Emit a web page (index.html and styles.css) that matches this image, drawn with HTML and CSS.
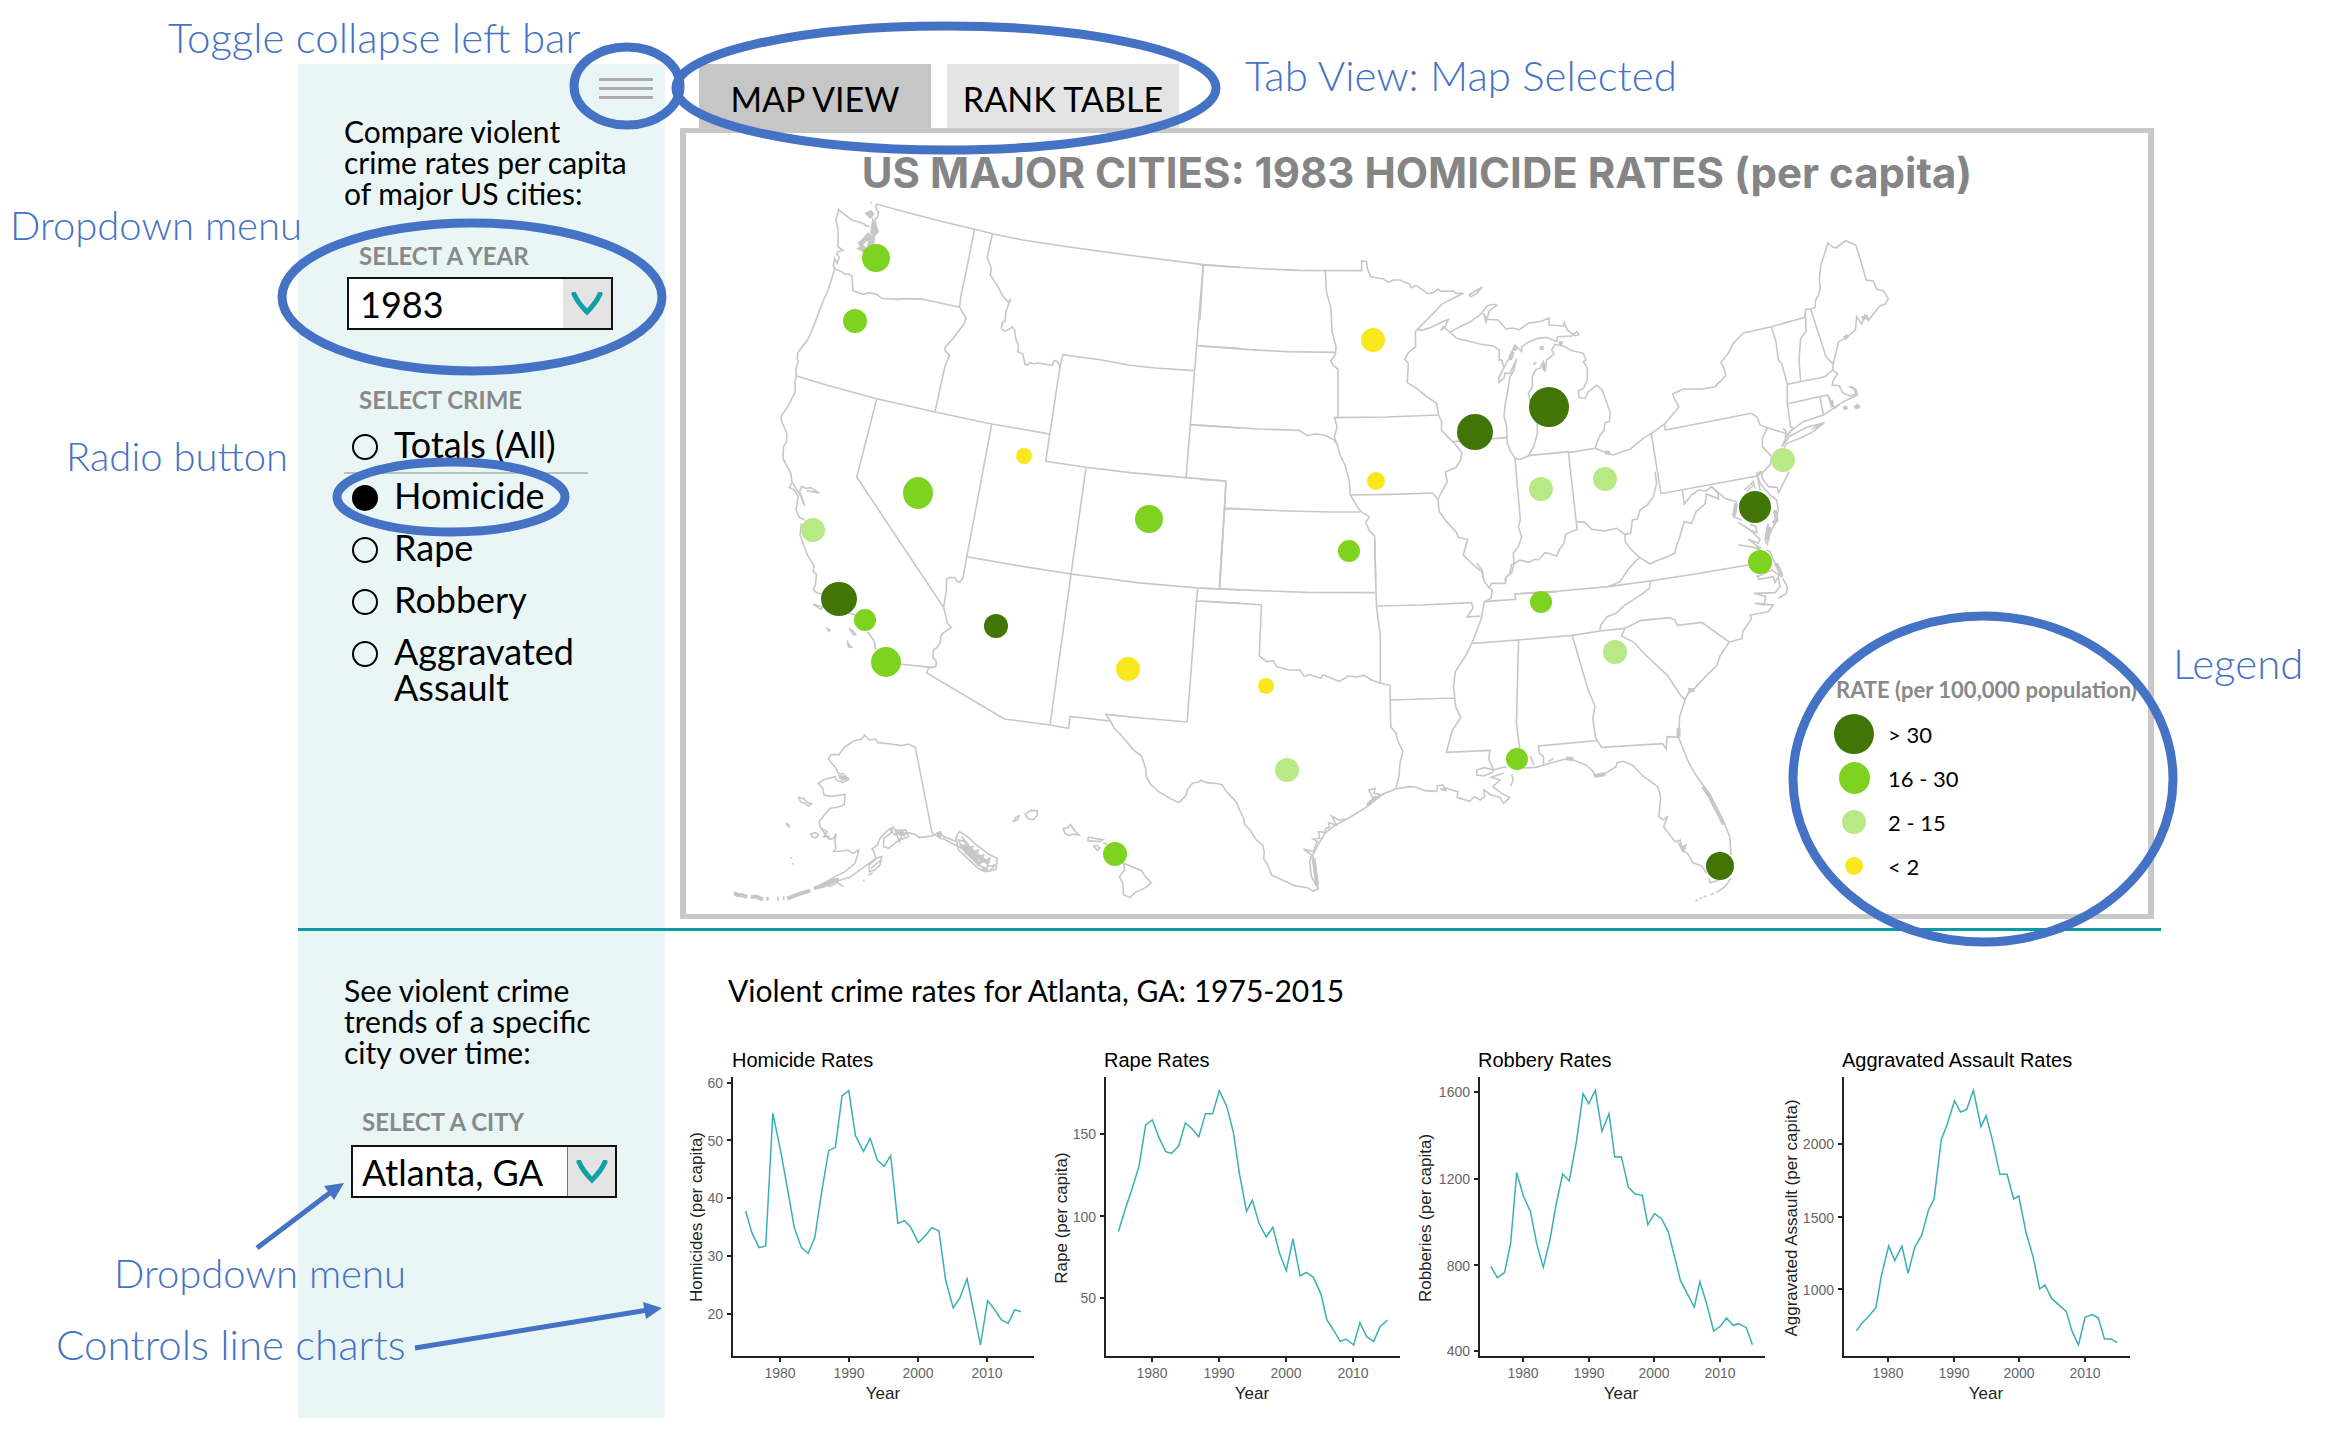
FILE: index.html
```html
<!DOCTYPE html>
<html lang="en">
<head>
<meta charset="utf-8">
<title>US Major Cities: Violent Crime Rates</title>
<link rel="stylesheet" href="styles.css">
</head>
<body>
<div class="app">
  <section class="row row-map">
    <aside class="sidebar">
      <button class="menu-toggle" type="button" aria-label="Toggle sidebar"><span></span><span></span><span></span></button>
      <p class="intro">Compare violent<br>crime rates per capita<br>of major US cities:</p>
      <label class="field-label year-label" for="year">SELECT A YEAR</label>
      <div class="dropdown">
        <select id="year"><option>1983</option></select>
        <span class="arrow"><svg viewBox="0 0 32 24"><path d="M3 2C6 9 11 15 16 20C21 15 26 9 29 2"/></svg></span>
      </div>
      <fieldset class="crimes">
        <legend class="field-label">SELECT CRIME</legend>
        <label class="crime all"><input type="radio" name="crime">Totals (All)</label>
        <label class="crime"><input type="radio" name="crime" checked>Homicide</label>
        <label class="crime"><input type="radio" name="crime">Rape</label>
        <label class="crime"><input type="radio" name="crime">Robbery</label>
        <label class="crime"><input type="radio" name="crime">Aggravated<br>Assault</label>
      </fieldset>
    </aside>
    <main class="main">
      <div class="tabs" role="tablist">
        <button class="tab selected" role="tab" aria-selected="true">MAP VIEW</button>
        <button class="tab" role="tab" aria-selected="false">RANK TABLE</button>
      </div>
      <div class="panel">
        <h1>US MAJOR CITIES: 1983 HOMICIDE RATES (per capita)</h1>
        <svg class="map" viewBox="686 198 1462 716" role="img" aria-label="Map of homicide rates">
          <g class="states">
            <!-- Northwest -->
            <g transform="translate(680 120) scale(.35714 .33333)">
              <path d="M549 252L640 278L725 302L825 328L875 341L960 360L1090 381L1280 409L1465 434L1568 442"/>
              <path d="M549 252L550 268L556 275L553 292L546 298L549 315L554 335L545 345L541 372M531 320L520 317L515 311L480 299L462 285L444 268L441 285L436 300L442 322L443 350L442 380L456 391L441 396L439 403L446 412L440 430L433 415L429 438L433 446L452 455L463 463L472 462L482 468L484 512L512 523L530 518L550 523L565 535L607 538L640 536L681 538L783 562"/>
              <path class="fill" d="M540 300l8 20 6 15-9 12-10-8 2-20zM500 370L527 340 538 350 505 376zM498 385l14-8 10 8-8 10zM520 280l14-8 8 10-8 12zM532 350l12-4-2 26-16 4zM533 246l4 2"/>
              <path d="M825 328L800 460L786 530L783 562L801 596L795 612L765 655L742 683L742 692L755 706L742 738L714 876"/>
              <path d="M875 341L860 412L872 445L869 465L885 490L905 530L918 545L925 540L912 575L911 602L903 607L900 625L908 633L918 630L930 621L937 630L940 655L948 678L946 695L960 702L966 733L972 735L981 728L990 732L1003 729L1042 736L1047 722L1056 724L1064 740L1072 704L1180 720L1260 736L1330 744L1441 752"/>
              <path d="M1064 740L1024 1024L1137 1042L1260 1058L1417 1073L1529 1083M1465 434L1441 752L1417 1073M1449 678L1568 686M1430 914L1568 924"/>
              <path d="M433 446L415 510L400 545L370 630L357 660L330 697L328 715L331 722L324 750L326 768L322 785L323 815L302 860L285 885L283 900L299 940L298 965L290 980L288 1015L310 1060L314 1088L306 1102L320 1110L331 1130L325 1170L334 1192L350 1200"/>
              <path d="M314 1088L338 1128L349 1158L344 1140L335 1115L341 1099L352 1105L365 1103L390 1119L355 1112"/>
              <path d="M326 768L410 795L551 836L714 876L873 912L1035 942M551 836L495 1071L612 1260L738 1462M873 912L803 1310M1137 1042L1095 1362M1529 1083L1525 1165L1511 1406M1525 1165L1568 1166"/>
            </g>
            <!-- Southwest, Alaska and Hawaii -->
            <g transform="translate(680 520) scale(.35714 .33333)">
              <path d="M340 10L336 45L358 108L375 136L373 154L382 163L379 195L373 208L384 219L400 222M470 278L490 284L505 300M525 335L543 362L548 390M615 432L710 443"/>
              <path d="M738 262L745 290L748 308L760 323L738 338L730 348L729 368L719 383L710 390L708 412L718 425L716 440L697 443L690 458L908 597L1036 615L1088 625L1092 589L1205 603L1192 583L1290 594L1420 606L1446 243L1568 250"/>
              <path d="M738 262L742 235L746 210L746 178L757 172L770 174L776 184L783 186L792 175L803 110L940 136L1095 162L1280 188L1450 204L1568 210M1450 204L1446 243M1095 162L1036 615"/>
              <path d="M1205 603L1216 625L1235 645L1268 688L1292 708L1304 745L1305 768L1317 792L1340 815L1382 841L1397 848L1416 828L1420 810L1435 790L1450 787L1458 781"/>
              <path d="M373 253L387 257L400 262L395 268L385 262zM412 326l8 4-3 4zM476 328l8 4 8 12-7 0zM468 362l4 10 8 10-8-1z"/>
              <path d="M706 940L659 682L640 672L620 677L590 672L555 668L548 657L530 660L517 645L508 658L488 662L470 675L460 682L445 704L423 704L415 717L437 745L443 760L458 762L472 778L456 788L437 780L435 770L405 778L387 790L400 805L403 825L425 829L462 823L460 855L440 862L420 865L400 890L390 905L392 920L408 945L418 958L430 955L437 940L434 965L436 985L430 995L455 993L470 990L485 1000L500 990L497 1005L490 1030L462 1055L430 1072L405 1088L375 1105L405 1100L435 1085L475 1072L510 1045L548 1015L543 995L537 988L553 975L560 955L580 932L597 922L590 940L570 955L570 980L585 985L610 962L640 950L632 930L605 930L615 945L640 938L662 945L668 953L690 950L706 948L728 935L735 948L775 965L780 990L800 1010L835 1045L855 1055L885 1048L888 1015L865 1003L830 975L805 950L782 935L772 955L775 965"/>
              <path d="M735 955L770 975L790 985L780 960L800 965L795 985L820 980L810 1000L835 990L825 1015L850 1005L840 1030L868 1015L860 1040L882 1035L865 1055M788 950L808 975L800 1000L830 1000L815 1010L845 1020L835 1035L855 1045M585 925L602 945L625 935L615 965L600 925M443 765L470 775L450 782M395 925L412 935L402 950L420 950M706 940L730 955L725 938"/>
              <path class="thick" d="M785 975L812 1005L840 1035M800 975L830 1005L865 1030M845 1045L862 1050M445 770L468 776M612 935L632 945M722 940L730 950"/>
              <path d="M530 1035L550 1015L565 1010L560 1035L545 1050L530 1055zM528 1065l12-6M535 1045L562 1020M332 832l15 4 8 10 13 6-8 6-14-10-8-2zM296 910l8 4 3 8zM366 942l12-4 10 6-8 10-10-4zM310 1012l4 3M314 1030l4 3M513 1080l4 2M405 1088L420 1100L440 1088L458 1100"/>
              <path class="thick" d="M152 1118L160 1125L172 1125L188 1131M198 1130L215 1130L232 1139M242 1136l6 0M272 1136l5 0M288 1135l5 0M300 1136L320 1128L345 1118L365 1112M375 1105L400 1098L430 1080L445 1080"/>
              <path d="M966 884L982 871L1000 872L1001 885L990 899L975 896zM934 904l6-12 10-4-6 12zM1073 925L1086 923L1094 914L1103 930L1118 945L1098 942L1090 947L1078 940zM1143 952L1184 959L1175 965L1142 962zM1158 978l10-2 8 8-8 7zM1185 968l10 4M1242 1030L1292 1052L1303 1070L1320 1088L1303 1103L1275 1117L1260 1133L1242 1124L1240 1090L1230 1070L1245 1050z"/>
            </g>
            <!-- Plains and Great Lakes -->
            <g transform="translate(1200 160) scale(.33333)">
              <path d="M0 314L100 321L200 327L300 331L485 332L485 302L499 305L503 328L512 350L550 357L565 367L580 360L600 360L628 372L634 384L648 376L684 401L700 398L714 387L723 394L760 393L767 400L790 400L760 415L725 433L690 470L652 508L646 515L647 560L625 578L614 598L625 610L622 668L650 685L680 710L710 730L716 765L725 785L724 810L750 838L765 852L786 878L782 900L768 922L736 936L742 965L720 1005L714 1020L718 1055L740 1085L770 1118L775 1133L803 1138L790 1185L820 1215L845 1235L852 1260"/>
              <path d="M376 332L379 395L393 445L396 515L408 560L407 577L403 590L392 602L400 617L414 627L414 772L404 773L411 800L403 833L411 852M10 314L0 480M0 557L150 569L260 575L407 577"/>
              <path d="M0 796L180 807L297 811L323 827L345 822L370 824L400 838L411 852L420 885L435 915L448 965L451 1005L475 1045L487 1058L508 1070L497 1088L510 1115L524 1128L527 1260"/>
              <path d="M404 773L560 771L716 765M451 1005L570 1003L697 999L714 1018M75 1045L260 1053L400 1056L480 1056M0 958L78 963L60 1260M757 845L920 833"/>
              <path d="M652 508L665 511L690 503L725 487L745 478L735 500L722 512L730 500L750 517L780 500L808 487L840 465L862 437L880 433L890 436L868 452L858 487L850 460L862 478L895 480L918 507L938 504L958 509L985 490L1025 484L1047 474L1047 495L1090 498L1093 488L1102 510L1125 527L1137 524L1130 515L1115 528L1073 530L1070 545L1040 532L1015 535L985 547L965 560L965 575L945 555L930 590L912 622L905 600L897 600L898 570L880 558L840 552L770 535L750 517M808 404L847 381L830 400L812 410z"/>
              <path d="M912 622L896 655L897 667L912 655L915 640L930 640L950 597L940 635L930 650L922 700L916 730L912 768L920 800L922 850L932 875L945 895L960 898L985 888L1002 858L1012 820L1012 790L1000 760L985 700L997 680L997 650L1008 628L1020 625L1030 605L1035 635L1040 600L1062 582L1055 570L1065 553L1095 560L1110 570L1150 580L1158 600L1150 605L1162 625L1162 660L1150 685L1135 693L1137 712L1155 716L1165 695L1190 676L1207 690L1231 760L1228 785L1215 787L1212 812L1200 825L1185 865L1108 878L1105 875L985 887"/>
              <path class="thick" d="M1024 558l2 12M1003 609l3 4M1076 548l12 3M1031 610l2 22M938 575l-8 25M944 562l2 10"/>
              <path d="M1105 875L1129 1088M945 895L961 1080L955 1100L965 1130L955 1160L940 1180L942 1212M913 1260L930 1240L935 1213L942 1212L960 1200L985 1207L1005 1198L1015 1200L1035 1178L1052 1182L1070 1188L1080 1165L1092 1150L1097 1122L1132 1108L1129 1088"/>
            </g>
            <!-- Northeast and Mid-Atlantic -->
            <g transform="translate(1560 200) scale(.33333)">
              <path d="M105 745L135 757L160 765L185 755L210 748L250 715L274 700L316 670L357 620L345 600L338 582L370 567L425 567L465 560L480 545L498 525L492 505L483 487L505 460L520 430L550 399L634 380L735 352L737 328L750 327L765 323L767 300L775 285L781 265L778 240L782 197L804 129L815 140L828 144L857 122L888 136L919 240L940 243L950 268L970 272L985 296L975 312L960 318L935 348L925 362L915 345L905 372L890 350L886 390L860 412L836 425L830 450L820 490L818 510L833 522L820 540L817 555L838 557L848 578L870 588L888 582L880 562L868 560L888 568L892 585L850 605L835 615L825 625L812 610L808 590"/>
              <path d="M835 615L810 632L790 645L730 665L695 690L680 710L665 740L690 708L740 682L793 668L760 695L720 715L680 730L672 745M755 690L775 672L768 686L780 672"/>
              <path d="M634 380L648 425L655 480L665 490L682 553L682 611L692 680L700 685L680 705M676 700L622 683L600 675L592 652L574 640L316 690L313 670M622 683L607 715L607 740L635 770L630 795L610 815L590 828M670 685L678 695L676 715"/>
              <path d="M737 352L738 395L722 415L717 480L722 543M752 327L798 470L818 490M682 553L795 530L818 510M682 611L803 585L808 600M780 592L790 642M274 702L303 881L592 828L600 870"/>
              <path d="M687 815L670 850L656 878L652 862L625 860L607 835L605 815L590 820L600 850L630 885L650 900L655 930L645 970L630 1000L622 1032L615 1020L620 990L625 970"/>
              <path d="M553 870L575 850L580 845L585 865M560 875l20-20M530 905L520 950L545 960M535 967L570 990L590 998L588 980L570 972M570 990L600 1018L595 1030L565 1018L602 1045L535 1035L575 1040L600 1050M620 1050L630 1055L640 1080L667 1132L635 1110L592 1130L597 1138L640 1130L645 1148L655 1130L660 1160L645 1178L582 1180L617 1190L612 1215L585 1210L640 1215L625 1235L570 1245L575 1257M668 1135L682 1160L680 1180L655 1195"/>
              <path class="thick" d="M528 910L522 948M645 930l5 30-10 10M813 600l5 22M905 355l20-5M852 415l12-8M648 1090l18 38M628 980l-6 40M850 626l12-5M884 624l8-6 6 6M135 757l15 3"/>
              <path d="M367 872L373 912L395 885L415 870L438 873L455 860L475 880L475 897L440 882L435 912L408 935L395 970L372 965L360 1010L347 1045L345 1060L310 1075L290 1082L270 1092L238 1072L210 1045L196 1025L195 1003M455 860L495 895L530 905M50 965L75 967L95 988L135 993L170 985L195 1003L212 1000L217 960L232 957L240 930L262 915L280 890L290 850L285 815"/>
              <path d="M238 1072L205 1108L180 1145L145 1160M-120 1180L0 1173L145 1160L270 1143L400 1123L565 1095"/>
            </g>
            <!-- South -->
            <g transform="translate(1200 540) scale(.35714 .33333)">
              <path d="M0 720L20 728L52 731L62 735L75 755L103 788L110 808L124 838L124 852L142 872L155 897L175 915L180 935L178 955L190 975L200 1005L235 1022L265 1037L300 1043L316 1053L331 1046L320 985L316 945L330 915L350 880L375 858L410 838L430 825L465 802L500 768L548 746L590 740L605 742L630 752L663 754"/>
              <path d="M331 1046L312 1010L307 965L313 945L290 927L318 935L328 905L317 897L335 895L332 875L350 878L352 865L362 862L360 848L382 855L369 828L388 840L410 838M468 795L485 775L473 750L490 745L487 760L510 765L478 790"/>
              <path d="M54 148L62 0M0 144L150 151L300 157L490 158M489 0L494 198L505 290L505 430L532 436L534 560L549 580L553 600L568 635L560 670L557 710L548 746"/>
              <path d="M0 183L172 194L166 348L186 365L205 362L215 380L250 390L280 390L292 410L305 403L338 415L345 405L390 424L415 408L440 411L460 406L480 420L505 430"/>
              <path d="M494 198L620 195L760 188L765 203L748 231L786 228M534 480L712 474M775 70L790 90L795 122L808 142L818 148L815 175L796 185L788 235L765 300L745 345L715 395L710 440L716 500L730 532L705 575L690 637L812 631L808 655L822 690L838 685L858 680"/>
              <path d="M808 142L818 130L855 130L858 110L873 98L880 70M796 185L884 178L881 162L1000 156"/>
              <path d="M1262 122L1258 145L1240 160L1215 178L1190 195L1165 220L1140 230L1122 255L1120 273M762 310L890 300L1042 286L1120 273L1190 265M892 300L886 550L895 625M1042 286L1087 450L1106 498L1100 535L1107 590L1112 602L948 618L950 640L962 650L962 675M1112 602L1125 622L1295 611L1305 626L1308 590L1340 592"/>
              <path d="M1340 592L1343 530L1358 480L1345 465L1308 405L1282 380L1245 342L1215 307L1180 288L1190 265L1235 241L1315 233L1330 240L1337 256L1405 247L1482 306L1455 350L1448 375L1415 410L1385 445L1367 460L1358 480M1482 306L1517 296L1520 275L1545 235"/>
              <path d="M1340 592L1365 660L1385 700L1415 745L1470 855L1483 890L1487 945M1487 1015L1470 1040L1445 1058M1438 1060l-8 4M1418 1068l-8 2M1405 1073l-6 4M1394 1080l-7 3M1425 1015L1428 1028L1455 1020"/>
              <path d="M905 684L940 682L985 668L1030 655L1045 660L1080 675L1100 693L1105 708L1135 700L1165 680L1168 668L1185 664L1210 675L1240 708L1282 740L1290 770L1285 830L1298 840L1310 828L1298 860L1330 905L1345 900L1350 930L1365 940L1380 968L1405 978L1418 1000M1338 905L1352 935L1362 912"/>
              <path class="thick" d="M1408 740L1425 765L1467 853M1025 655L1045 658M1105 708L1135 702M1340 565L1340 590M1367 450L1385 450M1346 925L1360 920M318 955L328 1035M470 795L495 770"/>
              <path d="M663 754L665 738L680 735L688 752L672 748L690 745L722 755L720 772L755 784L768 770L785 780L797 770L795 750L815 765L840 772L850 790L867 773L845 760L820 740L840 720L815 712L850 700M822 690L795 683L775 690L775 705L795 708L822 695M872 703L877 720L870 738M925 648L935 675M975 665L990 655"/>
            </g>
          </g>
          <g class="rate-high"><ellipse cx="839" cy="599" rx="18" ry="17"/><circle cx="996" cy="626" r="12"/><circle cx="1475" cy="432" r="18"/><circle cx="1549" cy="407" r="20"/><circle cx="1755" cy="507" r="16"/><circle cx="1720" cy="866" r="14"/></g>
          <g class="rate-mid"><circle cx="876" cy="258" r="14"/><circle cx="855" cy="321" r="12"/><ellipse cx="918" cy="493" rx="15" ry="16"/><circle cx="1149" cy="519" r="14"/><circle cx="865" cy="620" r="11"/><circle cx="886" cy="662" r="15"/><circle cx="1115" cy="854" r="12"/><circle cx="1349" cy="551" r="11"/><circle cx="1760" cy="562" r="12"/><circle cx="1541" cy="602" r="11"/><circle cx="1517" cy="759" r="11"/></g>
          <g class="rate-low"><circle cx="813" cy="530" r="12"/><circle cx="1541" cy="489" r="12"/><circle cx="1605" cy="479" r="12"/><circle cx="1783" cy="460" r="12"/><circle cx="1615" cy="652" r="12"/><circle cx="1287" cy="770" r="12"/></g>
          <g class="rate-min"><circle cx="1024" cy="456" r="8"/><circle cx="1128" cy="669" r="12"/><circle cx="1373" cy="340" r="12"/><circle cx="1376" cy="481" r="9"/><circle cx="1266" cy="686" r="8"/></g>
        </svg>
        <div class="legend">
          <h2>RATE (per 100,000 population)</h2>
          <ul>
            <li><i class="dot high"></i>&gt; 30</li>
            <li><i class="dot mid"></i>16 - 30</li>
            <li><i class="dot low"></i>2 - 15</li>
            <li><i class="dot min"></i>&lt; 2</li>
          </ul>
        </div>
      </div>
    </main>
  </section>

  <section class="row row-trends">
    <aside class="sidebar">
      <p class="intro">See violent crime<br>trends of a specific<br>city over time:</p>
      <label class="field-label city-label" for="city">SELECT A CITY</label>
      <div class="dropdown divided">
        <select id="city"><option>Atlanta, GA</option></select>
        <span class="arrow"><svg viewBox="0 0 32 24"><path d="M3 2C6 9 11 15 16 20C21 15 26 9 29 2"/></svg></span>
      </div>
    </aside>
    <div class="trends">
      <h2>Violent crime rates for Atlanta, GA: 1975-2015</h2>
      <div class="charts">
        <svg viewBox="685 1040 364 378">
          <text class="title" x="732" y="1067">Homicide Rates</text>
          <path class="axis" d="M732 1077V1357H1034M727 1083h5M727 1140h5M727 1198h5M727 1256h5M727 1314h5M780 1357v5M849 1357v5M918 1357v5M987 1357v5"/>
          <g class="ticks end"><text x="723" y="1088">60</text><text x="723" y="1146">50</text><text x="723" y="1203">40</text><text x="723" y="1261">30</text><text x="723" y="1319">20</text></g>
          <g class="ticks"><text x="780" y="1378">1980</text><text x="849" y="1378">1990</text><text x="918" y="1378">2000</text><text x="987" y="1378">2010</text></g>
          <text class="name" x="883" y="1399">Year</text>
          <text class="name" transform="translate(702 1217) rotate(-90)">Homicides (per capita)</text>
          <g transform="translate(680 960) scale(.44643 .33333)"><polyline points="147,753 161,818 177,863 192,858 208,460 225,570 242,695 256,803 272,863 287,880 302,833 318,690 333,572 348,562 363,408 378,392 393,527 411,574 426,535 442,600 457,619 472,587 488,790 503,782 517,802 534,848 549,828 564,803 580,813 595,960 612,1044 627,1014 643,956 658,1055 673,1155 689,1022 704,1047 720,1080 735,1090 750,1049 764,1055"/></g>
        </svg>
        <svg viewBox="1049 1040 364 378">
          <text class="title" x="1104" y="1067">Rape Rates</text>
          <path class="axis" d="M1105 1077V1357H1400M1100 1134h5M1100 1216h5M1100 1298h5M1152 1357v5M1219 1357v5M1286 1357v5M1353 1357v5"/>
          <g class="ticks end"><text x="1096" y="1139">150</text><text x="1096" y="1222">100</text><text x="1096" y="1303">50</text></g>
          <g class="ticks"><text x="1152" y="1378">1980</text><text x="1219" y="1378">1990</text><text x="1286" y="1378">2000</text><text x="1353" y="1378">2010</text></g>
          <text class="name" x="1252" y="1399">Year</text>
          <text class="name" transform="translate(1067 1218) rotate(-90)">Rape (per capita)</text>
          <g transform="translate(680 960) scale(.44643 .33333)"><polyline points="982,815 998,745 1013,685 1028,620 1043,495 1058,480 1073,533 1088,575 1101,580 1117,558 1132,489 1147,506 1162,531 1177,461 1193,461 1208,392 1225,440 1240,520 1253,640 1269,754 1282,721 1297,790 1313,831 1328,802 1343,880 1358,932 1373,837 1389,948 1403,937 1419,952 1436,1003 1449,1080 1466,1115 1479,1144 1492,1137 1509,1155 1523,1088 1538,1130 1554,1144 1568,1100 1585,1080"/></g>
        </svg>
        <svg viewBox="1413 1040 364 378">
          <text class="title" x="1478" y="1067">Robbery Rates</text>
          <path class="axis" d="M1479 1077V1357H1765M1474 1092h5M1474 1179h5M1474 1265h5M1474 1351h5M1523 1357v5M1589 1357v5M1654 1357v5M1720 1357v5"/>
          <g class="ticks end"><text x="1470" y="1097">1600</text><text x="1470" y="1184">1200</text><text x="1470" y="1271">800</text><text x="1470" y="1356">400</text></g>
          <g class="ticks"><text x="1523" y="1378">1980</text><text x="1589" y="1378">1990</text><text x="1654" y="1378">2000</text><text x="1720" y="1378">2010</text></g>
          <text class="name" x="1621" y="1399">Year</text>
          <text class="name" transform="translate(1431 1218) rotate(-90)">Robberies (per capita)</text>
          <g transform="translate(1380 960) scale(.5102 .33333)"><polyline points="217,919 230,953 244,938 256,850 268,638 281,708 295,755 307,850 320,922 333,840 345,735 358,642 371,663 385,545 398,401 409,431 422,391 435,514 449,461 460,591 473,590 487,682 500,702 514,706 525,794 538,761 552,776 565,816 577,888 589,962 602,1000 616,1041 627,965 640,1030 654,1113 667,1099 679,1074 692,1096 703,1091 718,1103 730,1154"/></g>
        </svg>
        <svg viewBox="1777 1040 364 378">
          <text class="title" x="1842" y="1067">Aggravated Assault Rates</text>
          <path class="axis" d="M1843 1077V1357H2130M1838 1144h5M1838 1217h5M1838 1289h5M1888 1357v5M1954 1357v5M2019 1357v5M2085 1357v5"/>
          <g class="ticks end"><text x="1834" y="1149">2000</text><text x="1834" y="1223">1500</text><text x="1834" y="1295">1000</text></g>
          <g class="ticks"><text x="1888" y="1378">1980</text><text x="1954" y="1378">1990</text><text x="2019" y="1378">2000</text><text x="2085" y="1378">2010</text></g>
          <text class="name" x="1986" y="1399">Year</text>
          <text class="name" transform="translate(1797 1218) rotate(-90)">Aggravated Assault (per capita)</text>
          <g transform="translate(1380 960) scale(.5102 .33333)"><polyline points="934,1112 943,1092 957,1070 972,1043 983,945 997,858 1009,902 1023,858 1035,940 1048,862 1062,825 1075,750 1086,718 1100,540 1112,492 1126,422 1138,456 1150,448 1163,391 1178,500 1188,467 1201,545 1215,643 1229,643 1242,717 1252,708 1266,816 1280,890 1293,987 1303,975 1317,1016 1330,1034 1345,1054 1356,1112 1369,1155 1382,1072 1396,1064 1408,1074 1420,1137 1433,1137 1445,1148"/></g>
        </svg>
      </div>
    </div>
  </section>
</div>

<!-- Callouts drawn over the page -->
<div class="notes">
  <svg width="2345" height="1445" viewBox="0 0 2345 1445" aria-hidden="true">
    <ellipse cx="627" cy="86" rx="53" ry="39"/>
    <ellipse cx="946" cy="88" rx="270" ry="62"/>
    <ellipse cx="472" cy="297" rx="190" ry="74"/>
    <ellipse cx="451" cy="497" rx="114" ry="35"/>
    <ellipse cx="1983" cy="779" rx="190" ry="163"/>
    <path class="shaft" d="M257 1248L331 1192M415 1348L648 1310"/>
    <path class="head" d="M344 1183L324 1186L334 1200zM662 1308L643 1302L646 1319z"/>
  </svg>
  <p class="note n-toggle">Toggle collapse left bar</p>
  <p class="note small n-year">Dropdown menu</p>
  <p class="note small n-radio">Radio button</p>
  <p class="note n-tab">Tab View: Map Selected</p>
  <p class="note n-legend">Legend</p>
  <p class="note small n-city">Dropdown menu</p>
  <p class="note n-charts">Controls line charts</p>
</div>
</body>
</html>
```
FILE: styles.css
```css
* { box-sizing: border-box; }

body {
  margin: 0;
  position: relative;
  background: #fff;
  color: #000;
  font-family: Lato, "Liberation Sans", sans-serif;
}

h1, h2, p, ul { margin: 0; padding: 0; }

.app { padding: 64px 184px 26px 298px; }

.row { display: flex; }

.row-trends { position: relative; border-top: 3px solid #0a9ca2; }

.sidebar {
  flex: 0 0 367px;
  padding-left: 46px;
  background: #eaf6f6;
}

.row-trends .sidebar { padding-top: 44px; }

.menu-toggle {
  display: flex;
  flex-direction: column;
  gap: 6px;
  width: 54px;
  height: 52px;
  margin: 0 12px 0 auto;
  padding: 14px 0 0;
  border: 0;
  background: none;
}

.menu-toggle span { height: 3px; background: #afabab; }

.intro { font-size: 30px; line-height: 31px; }

.field-label {
  display: block;
  padding: 0 0 0 15px;
  color: #898989;
  font-size: 24px;
  font-weight: 700;
  line-height: 32px;
}

.year-label { margin: 31px 0 5px; }
.city-label { margin: 38px 0 7px; padding-left: 18px; }

.dropdown {
  position: relative;
  width: 266px;
  height: 53px;
  margin-left: 3px;
}

.row-trends .dropdown { margin-left: 7px; }

.dropdown select {
  width: 100%;
  height: 100%;
  padding: 0 0 0 11px;
  border: 2px solid #111;
  border-radius: 0;
  background: #fff;
  color: #000;
  font: 36px Lato, "Liberation Sans", sans-serif;
  appearance: none;
}

.row-trends .dropdown select { padding-left: 9px; }

.arrow {
  position: absolute;
  top: 2px;
  right: 2px;
  bottom: 2px;
  display: grid;
  place-items: center;
  width: 48px;
  background: #e4e4e4;
  pointer-events: none;
}

.divided .arrow { border-left: 1px solid #777; }

.arrow svg {
  width: 32px;
  height: 24px;
  fill: none;
  stroke: #10a0a5;
  stroke-linecap: round;
  stroke-width: 5;
}

.crimes {
  min-width: 0;
  margin: 54px 0 0;
  padding: 0;
  border: 0;
}

.crimes legend { margin-bottom: 10px; }

.crime {
  display: flex;
  gap: 16px;
  margin-bottom: 16px;
  padding-left: 8px;
  font-size: 36px;
  line-height: 36px;
}

.crime.all {
  width: 244px;
  height: 48px;
  margin-bottom: 3px;
  border-bottom: 2px solid #b7c1c1;
}

.crime input {
  flex: none;
  width: 26px;
  height: 26px;
  margin: 8px 0 0;
  border: 2px solid #000;
  border-radius: 50%;
  background: transparent;
  appearance: none;
}

.crime input:checked { background: #000; }

.main { flex: 1; min-width: 0; padding: 0 7px 9px 15px; }

.tabs { display: flex; gap: 16px; padding-left: 19px; }

.tab {
  width: 232px;
  height: 64px;
  padding: 4px 0 0;
  border: 0;
  background: #e4e4e4;
  color: #000;
  font: 34px Lato, "Liberation Sans", sans-serif;
}

.tab.selected { background: #c6c6c6; }

.panel {
  position: relative;
  border: solid #c8c8c8;
  border-width: 5px 6px;
}

.panel h1 {
  padding-top: 14px;
  color: #858585;
  font: 700 42px/51px Inter, "Open Sans", sans-serif;
  text-align: center;
  white-space: nowrap;
}

.map { display: block; width: 100%; }

.states path {
  fill: none;
  stroke: #c7c7c7;
  stroke-width: 1.6px;
  vector-effect: non-scaling-stroke;
}

.states .fill { fill: #c7c7c7; }
.states .thick { stroke-width: 4px; }

.rate-high { fill: #417505; }
.rate-mid { fill: #7ed321; }
.rate-low { fill: #b8e986; }
.rate-min { fill: #f8e71c; }

.legend { position: absolute; right: 2px; bottom: 26px; width: 310px; }

.legend h2 {
  color: #898989;
  font-size: 22px;
  line-height: 32px;
  white-space: nowrap;
}

.legend ul { margin-top: 6px; list-style: none; }

.legend li {
  display: grid;
  grid-template-columns: 40px 1fr;
  align-items: center;
  column-gap: 14px;
  height: 44px;
  margin-left: -2px;
  font-size: 22px;
}

.dot { justify-self: center; border-radius: 50%; }
.dot.high { width: 40px; height: 40px; background: #417505; }
.dot.mid { width: 31px; height: 32px; background: #7ed321; }
.dot.low { width: 24px; height: 24px; background: #b8e986; }
.dot.min { width: 18px; height: 18px; background: #f8e71c; }

.trends { flex: 1; min-width: 0; padding: 44px 20px 0; }

.trends h2 {
  padding-left: 43px;
  font-size: 30px;
  font-weight: 400;
  line-height: 31px;
}

.charts {
  display: grid;
  grid-template-columns: repeat(4, 1fr);
  margin: 34px 0 0;
}

.charts svg {
  display: block;
  width: 100%;
  overflow: visible;
  font-family: "Liberation Sans", Arial, sans-serif;
}

.charts .title { font-size: 20px; }
.charts .axis { fill: none; stroke: #222; stroke-width: 2; }
.charts .ticks { fill: #666; font-size: 14px; text-anchor: middle; }
.charts .ticks.end { text-anchor: end; }
.charts .name { fill: #222; font-size: 17px; text-anchor: middle; }

.charts polyline {
  fill: none;
  stroke: #3aafb4;
  stroke-width: 1.5px;
  vector-effect: non-scaling-stroke;
}

.notes {
  position: absolute;
  top: 0;
  left: 0;
  pointer-events: none;
}

.notes svg { display: block; }
.notes ellipse { fill: none; stroke: #4472c4; stroke-width: 9; }
.notes .shaft { stroke: #4472c4; stroke-width: 5; }
.notes .head { fill: #4472c4; }

.note {
  position: absolute;
  color: #4472c4;
  font-size: 42px;
  font-weight: 300;
  line-height: 50px;
  white-space: nowrap;
}

.note.small { font-size: 40px; }

.n-toggle { left: 168px; top: 12px; }
.n-year { left: 10px; top: 200px; }
.n-radio { left: 66px; top: 431px; }
.n-tab { left: 1245px; top: 50px; }
.n-legend { left: 2173px; top: 638px; }
.n-city { left: 114px; top: 1248px; }
.n-charts { left: 56px; top: 1319px; }
```
